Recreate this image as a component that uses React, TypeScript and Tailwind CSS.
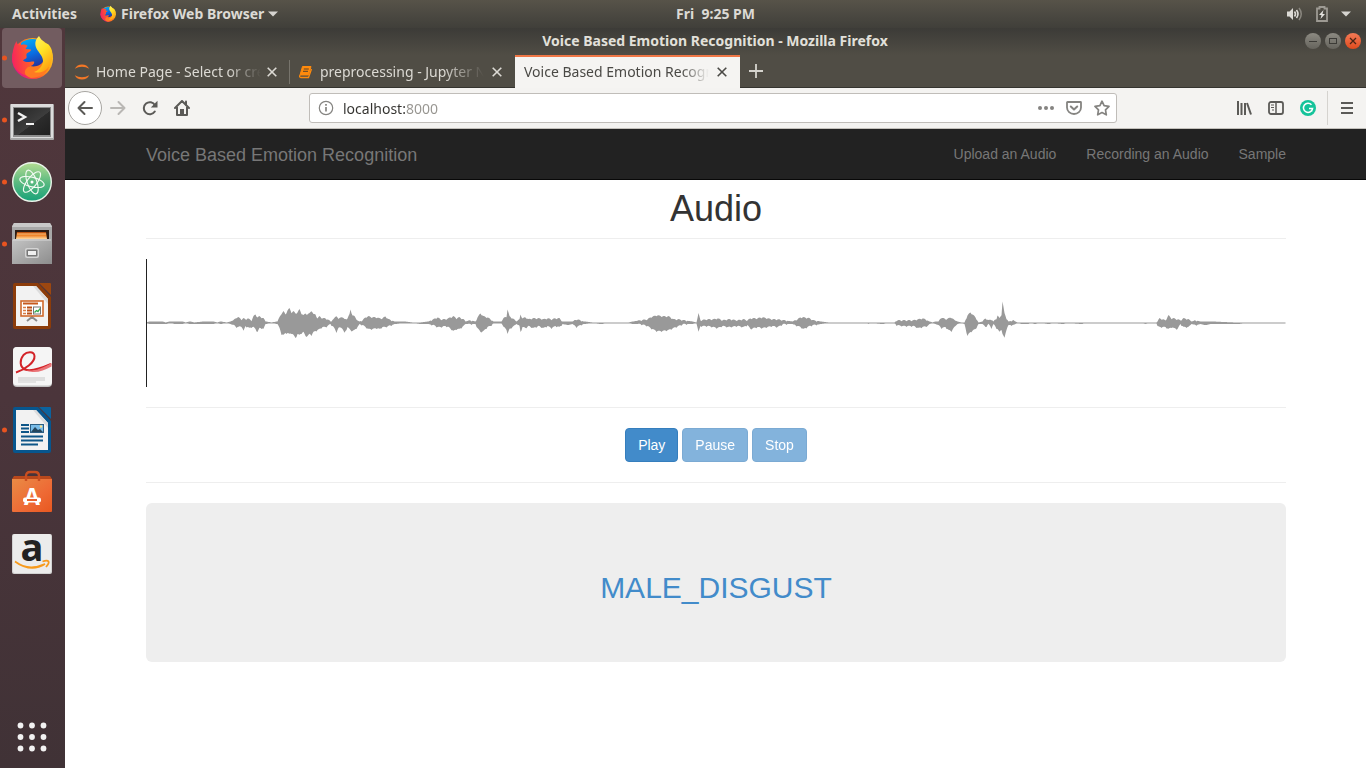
import React from "react";

type IconProps = { className?: string };

/* ---------- Dock artwork ---------- */

function FirefoxLogo({ id, className }: { id: string; className?: string }) {
  return (
    <svg viewBox="0 0 48 48" className={className} aria-hidden="true">
      <defs>
        <linearGradient id={id + "-body"} x1="0.95" y1="0.2" x2="0.05" y2="0.7">
          <stop offset="0" stopColor="#ffd42a" />
          <stop offset="0.35" stopColor="#ff9a16" />
          <stop offset="0.65" stopColor="#ff4f33" />
          <stop offset="1" stopColor="#e31587" />
        </linearGradient>
        <linearGradient id={id + "-globe"} x1="0.3" y1="0" x2="0.6" y2="1">
          <stop offset="0" stopColor="#00a8f5" />
          <stop offset="0.5" stopColor="#0a6be0" />
          <stop offset="1" stopColor="#2b2a8f" />
        </linearGradient>
        <linearGradient id={id + "-head"} x1="0" y1="0.6" x2="1" y2="0.4">
          <stop offset="0" stopColor="#f5245e" />
          <stop offset="0.6" stopColor="#ff5a2c" />
          <stop offset="1" stopColor="#ff8a1c" />
        </linearGradient>
        <linearGradient id={id + "-tail"} x1="0" y1="0" x2="0.5" y2="1">
          <stop offset="0" stopColor="#fff36a" />
          <stop offset="0.5" stopColor="#ffe226" />
          <stop offset="1" stopColor="#ffa412" />
        </linearGradient>
      </defs>
      <circle cx="24.500" cy="24.500" r="20.500" fill={"url(#" + id + "-body)"} />
      <path d="M13 9c5-4 12-5 17-3l8 12c1 9-3 17-12 17-7 0-12-4-13-10z" fill={"url(#" + id + "-globe)"} />
      <path
        d="M8.500 7c.3 2.500 1.500 4 3 4.500 2.500-1.200 6-1.400 8 .3l-2 3.200 5.500.5c.5 2-4 3-4.500 4.500-.5 2 1 3-.5 4.500-1.500 1-2.500 1-3 2 4 3 8 .5 11 1 1 2-1.500 4.500-5 5 3 3 7 1.500 9 0l2 6-8 4C14 42 5 36 4.200 26 4 19 5.500 12 8.500 7z"
        fill={"url(#" + id + "-head)"}
      />
      <path d="M22 32c6 1.500 12-1 14-6l5 7c-3 7-10 11-18 11-7-2-9-8-1-12z" fill="#ff7a22" />
      <path
        d="M31 2c-4 4-4.500 8-2.500 12.500 2 4 6 7 6.500 12C35 32 31 36 26 38c6 2 13-1 16-7 4-8 3-15-1-20-1-1-2.500-1.500-4.500-2.500-2-2-4-3.500-5.500-6.500z"
        fill={"url(#" + id + "-tail)"}
      />
    </svg>
  );
}

function TerminalArt({ className }: IconProps) {
  return (
    <svg viewBox="0 0 48 48" className={className} aria-hidden="true">
      <defs>
        <linearGradient id="term-bg" x1="0" y1="0" x2="1" y2="1">
          <stop offset="0" stopColor="#262626" />
          <stop offset="0.55" stopColor="#3d3d3d" />
          <stop offset="0.56" stopColor="#2c2c2c" />
          <stop offset="1" stopColor="#1f1f1f" />
        </linearGradient>
      </defs>
      <rect x="2" y="8" width="44" height="36" rx="1" fill="#a8a8a8" />
      <rect x="3" y="8" width="42" height="34" fill="#dcdcdc" />
      <rect x="5" y="11" width="38" height="30" fill="#8d8d8d" />
      <rect x="6" y="12" width="36" height="27" fill="url(#term-bg)" />
      <path d="M10 17l7 4-7 4" fill="none" stroke="#f2f2f2" strokeWidth="2.400" />
      <path d="M18 28h8" stroke="#f2f2f2" strokeWidth="2" />
    </svg>
  );
}

function AtomArt({ className }: IconProps) {
  return (
    <svg viewBox="0 0 48 48" className={className} aria-hidden="true">
      <defs>
        <linearGradient id="atom-bg" x1="0" y1="0" x2="0" y2="1">
          <stop offset="0" stopColor="#b4dc92" />
          <stop offset="0.5" stopColor="#5cba80" />
          <stop offset="1" stopColor="#17a279" />
        </linearGradient>
      </defs>
      <circle cx="24" cy="24" r="19.300" fill="url(#atom-bg)" stroke="#eaf5ea" strokeWidth="1.400" />
      <g fill="none" stroke="#f3faf3" strokeWidth="1.100">
        <ellipse cx="24" cy="24" rx="12.500" ry="4.800" transform="rotate(14 24 24)" />
        <ellipse cx="24" cy="24" rx="12.500" ry="4.800" transform="rotate(70 24 24)" />
        <ellipse cx="24" cy="24" rx="12.500" ry="4.800" transform="rotate(128 24 24)" />
      </g>
      <circle cx="24" cy="24" r="1.500" fill="#fff" />
    </svg>
  );
}

function FilesArt({ className }: IconProps) {
  return (
    <svg viewBox="0 0 48 48" className={className} aria-hidden="true">
      <defs>
        <linearGradient id="files-body" x1="0" y1="0" x2="1" y2="1">
          <stop offset="0" stopColor="#c4c4c4" />
          <stop offset="1" stopColor="#8d8d8d" />
        </linearGradient>
        <linearGradient id="files-paper" x1="0" y1="0" x2="0" y2="1">
          <stop offset="0" stopColor="#b54a0c" />
          <stop offset="0.5" stopColor="#f0862b" />
          <stop offset="1" stopColor="#ffd9a0" />
        </linearGradient>
      </defs>
      <path d="M6 3h36l2 3v38H4V6z" fill="#a8a8a8" />
      <path d="M6 3h36l2 4H4z" fill="#c9c9c9" />
      <rect x="7" y="10" width="34" height="9" fill="#2c1c14" />
      <path d="M9 12h29l1 7H8z" fill="url(#files-paper)" />
      <path d="M9 14h29" stroke="#ffc27a" strokeWidth="1" />
      <path d="M4 20l2-1h36l2 1v24H4z" fill="url(#files-body)" />
      <path d="M5 20h38" stroke="#d9d9d9" strokeWidth="1" />
      <rect x="17" y="28" width="14" height="10" rx="2" fill="#d4d4d4" />
      <rect x="18.500" y="29.500" width="11" height="7" rx="1" fill="#777" />
      <rect x="20" y="31" width="8" height="4" fill="#efefef" />
    </svg>
  );
}

function SheetBase({ dark, light }: { dark: string; light: string }) {
  return (
    <>
      <path d="M7 1h23l13 14v30a2 2 0 0 1-2 2H7a2 2 0 0 1-2-2V3a2 2 0 0 1 2-2z" fill={dark} />
      <path d="M8 4h20l12 13v27H8z" fill="#f2f2f2" />
      <path d="M28 4l12 13v5L25 4z" fill="#dcdcdc" />
      <path d="M31 1h11a1 1 0 0 1 1 1v11z" fill={light} />
    </>
  );
}

function ImpressArt({ className }: IconProps) {
  return (
    <svg viewBox="0 0 48 48" className={className} aria-hidden="true">
      <SheetBase dark="#8c3c0a" light="#9c4710" />
      <path d="M24 34v3M19 39l5-4 5 4" fill="none" stroke="#8a8a8a" strokeWidth="2" />
      <rect x="13" y="19" width="22" height="15" fill="#fff" stroke="#d0692c" strokeWidth="1.600" />
      <path d="M15 21.500h15" stroke="#c65a1e" strokeWidth="2" />
      <path d="M15 25.500h3M15 28.500h3M15 31.500h3" stroke="#d87c46" strokeWidth="1.600" />
      <path d="M19 25.500h5M19 28.500h5M19 31.500h5" stroke="#bb4f15" strokeWidth="1.800" />
      <rect x="25.500" y="25" width="7" height="7" fill="#fff" stroke="#777" />
      <path d="M26.500 30.500l2-2 1.500 1 2-3" fill="none" stroke="#2faa4a" strokeWidth="1.300" />
    </svg>
  );
}

function ViewerArt({ className }: IconProps) {
  return (
    <svg viewBox="0 0 48 48" className={className} aria-hidden="true">
      <rect x="5" y="3" width="39" height="40" rx="4" fill="#c2c2c2" />
      <rect x="5" y="3" width="39" height="38.500" rx="4" fill="#f5f5f5" />
      <rect x="10" y="33" width="27" height="4" fill="#dedede" />
      <rect x="10" y="37" width="18" height="2" fill="#e2e2e2" />
      <path
        d="M8 28.500c9-3 19-10 18.500-16.500C26 7 19 7.500 15.500 11c-4 5-4 12 1.500 14.500 7 2.500 18-2 26-5.500"
        fill="none"
        stroke="#d32328"
        strokeWidth="2"
      />
      <path d="M18 26c7 2 15-1 25.500-7v3.500C34 28 25 30 18 26z" fill="#ea7477" />
    </svg>
  );
}

function WriterArt({ className }: IconProps) {
  return (
    <svg viewBox="0 0 48 48" className={className} aria-hidden="true">
      <SheetBase dark="#07568e" light="#0b639f" />
      <g stroke="#0d5688" strokeWidth="1.800">
        <path d="M13 19h8M13 22.500h8M13 26h8" />
        <path d="M13 30.500h22M13 34.500h22M13 38.500h17" />
      </g>
      <rect x="22" y="18" width="14" height="9" fill="#2d5f83" />
      <rect x="23" y="19" width="12" height="7" fill="#79bce8" />
      <path d="M23 26l4-5 3 3 2-1 3 3z" fill="#25465c" />
      <circle cx="33" cy="20.500" r="1.200" fill="#ffe38a" />
    </svg>
  );
}

function SoftwareArt({ className }: IconProps) {
  return (
    <svg viewBox="0 0 48 48" className={className} aria-hidden="true">
      <defs>
        <linearGradient id="bag" x1="0" y1="0" x2="1" y2="1">
          <stop offset="0" stopColor="#e98b45" />
          <stop offset="0.6" stopColor="#ee6a35" />
          <stop offset="1" stopColor="#e85820" />
        </linearGradient>
      </defs>
      <path d="M6 8h36l2 3H4z" fill="#b8481c" />
      <path d="M4 11h40v32a1 1 0 0 1-1 1H5a1 1 0 0 1-1-1z" fill="url(#bag)" />
      <path d="M18 13V8q0-4 4-4h5q4 0 4 4v5" fill="none" stroke="#c94e20" strokeWidth="2.400" />
      <text x="24" y="37" textAnchor="middle" fontSize="23" fontWeight="700" fill="#fff" fontFamily="Open Sans, sans-serif">
        A
      </text>
      <rect x="15" y="29.500" width="18" height="5" rx="2" fill="#fff" />
      <rect x="19" y="31" width="10" height="2" fill="#e9622d" />
    </svg>
  );
}

function AmazonArt({ className }: IconProps) {
  return (
    <svg viewBox="0 0 48 48" className={className} aria-hidden="true">
      <rect x="4" y="4" width="40" height="40" rx="2" fill="#d2d2d2" />
      <rect x="5" y="4" width="38" height="39" rx="2" fill="#ececec" />
      <text x="24" y="31" textAnchor="middle" fontSize="38" fontWeight="700" fill="#222" fontFamily="Open Sans, sans-serif">
        a
      </text>
      <path d="M7 31.500q13 10 30 2.500-14 9-30-2.500z" fill="#f79a1c" stroke="#f79a1c" strokeWidth="1.600" />
      <path d="M34.500 31.500q5-1.500 6 0t-2.500 5.500" fill="none" stroke="#f79a1c" strokeWidth="1.800" />
    </svg>
  );
}

/* ---------- Dock ---------- */

const dockApps = [
  { name: "Firefox Web Browser", art: <FirefoxLogo id="dock" className="size-12" />, running: true, focused: true },
  { name: "Terminal", art: <TerminalArt className="size-12" />, running: true },
  { name: "Atom", art: <AtomArt className="size-12" />, running: true },
  { name: "Files", art: <FilesArt className="size-12" />, running: true },
  { name: "LibreOffice Impress", art: <ImpressArt className="size-12" />, running: false },
  { name: "Document Viewer", art: <ViewerArt className="size-12" />, running: false },
  { name: "LibreOffice Writer", art: <WriterArt className="size-12" />, running: true },
  { name: "Ubuntu Software", art: <SoftwareArt className="size-12" />, running: false },
  { name: "Amazon", art: <AmazonArt className="size-12" />, running: false },
];

function Dock() {
  return (
    <nav
      aria-label="Dock"
      className="flex w-[65px] shrink-0 flex-col gap-0.5 bg-linear-to-b from-[#50373c] via-[#4b353b] to-[#403236] px-0.5"
    >
      {dockApps.map((app) => (
        <button
          key={app.name}
          type="button"
          aria-label={app.name}
          className={
            app.focused
              ? "relative flex size-[60px] items-center justify-center rounded bg-[#725c60]"
              : "relative flex size-[60px] items-center justify-center rounded"
          }
        >
          {app.running && <span className="absolute top-1/2 left-0 size-[5px] -translate-y-1/2 rounded-full bg-[#e95420]" />}
          {app.art}
        </button>
      ))}
      <button type="button" aria-label="Show Applications" className="mt-auto mb-px flex size-[60px] items-center justify-center">
        <svg viewBox="0 0 48 48" className="size-12" aria-hidden="true" fill="#f2f2f2">
          {[12.5, 24, 35.5].map((y) => [12.5, 24, 35.5].map((x) => <circle key={x + "-" + y} cx={x} cy={y} r="2.900" />))}
        </svg>
      </button>
    </nav>
  );
}

/* ---------- Desktop bar ---------- */

function Caret() {
  return (
    <svg viewBox="0 0 10 6" className="h-1.5 w-2.5" aria-hidden="true">
      <path d="M0 .5h10L5 5.500z" fill="#d6d4d0" />
    </svg>
  );
}

function DesktopBar() {
  return (
    <header className="grid h-7 grid-cols-[1fr_auto_1fr] items-center bg-linear-to-b from-[#575349] to-[#403f3a] pr-[15px] pl-3 text-sm font-bold text-[#dcdad5]">
      <div className="flex items-center gap-[22px]">
        <button type="button">Activities</button>
        <button type="button" className="flex items-center gap-1">
          <FirefoxLogo id="bar" className="size-[18px]" />
          <span>Firefox Web Browser</span>
          <Caret />
        </button>
      </div>
      <time className="ml-[68px] whitespace-pre">Fri  9:25 PM</time>
      <button type="button" aria-label="System menu" className="ml-auto flex items-center gap-3">
        <svg viewBox="0 0 16 14" className="h-3.5 w-4" aria-hidden="true">
          <path d="M0 4.500h2.500L6 1v12L2.500 9.500H0z" fill="#dcdad5" />
          <path d="M7.500 4.500q2 2.500 0 5M9.500 3q3 4 0 8" fill="none" stroke="#dcdad5" strokeWidth="1.600" />
          <path d="M12 1q4.500 6 0 12" fill="none" stroke="#89867e" strokeWidth="1.500" />
        </svg>
        <svg viewBox="0 0 14 16" className="h-4 w-3.5" aria-hidden="true">
          <path d="M2 2.500h2.500V1h5v1.500H12V15H2z" fill="none" stroke="#9d9a93" strokeWidth="1.800" />
          <path d="M8.500 4L4 9h2.500L5.500 13 10 8H7.500z" fill="#e4e2de" />
        </svg>
        <Caret />
      </button>
    </header>
  );
}

/* ---------- Browser window ---------- */

function CloseCross() {
  return (
    <svg viewBox="0 0 10 10" className="size-2.5" aria-hidden="true">
      <path d="M.7.7l8.600 8.600M9.300.7L.7 9.300" stroke="currentColor" strokeWidth="1.600" fill="none" />
    </svg>
  );
}

function WindowButtons() {
  const base = "flex size-4 items-center justify-center rounded-full";
  return (
    <div className="flex gap-1">
      <button type="button" aria-label="Minimize" className={base + " bg-linear-to-b from-[#8c8a82] to-[#66645d]"}>
        <svg viewBox="0 0 16 16" className="size-4"><path d="M4 8.500h8" stroke="#3c3b37" /></svg>
      </button>
      <button type="button" aria-label="Maximize" className={base + " bg-linear-to-b from-[#8c8a82] to-[#66645d]"}>
        <svg viewBox="0 0 16 16" className="size-4"><rect x="4.500" y="5.500" width="7" height="5" fill="none" stroke="#3c3b37" /></svg>
      </button>
      <button type="button" aria-label="Close" className={base + " bg-linear-to-b from-[#f47a55] to-[#df4a1a]"}>
        <svg viewBox="0 0 16 16" className="size-4"><path d="M5 5l6 6M11 5l-6 6" stroke="#4a2414" strokeWidth="1.300" /></svg>
      </button>
    </div>
  );
}

function JupyterIcon() {
  return (
    <svg viewBox="0 0 16 16" className="size-4 shrink-0" aria-hidden="true" fill="#f37726">
      <path d="M.8 4.800Q3 .5 8 .5t7.200 4.300Q12 2.800 8 2.800T.8 4.800z" />
      <path d="M.8 11.200Q3 15.500 8 15.500t7.200-4.300Q12 13.200 8 13.200T.8 11.200z" />
    </svg>
  );
}

function NotebookIcon() {
  return (
    <svg viewBox="0 0 14 14" className="size-3.5 shrink-0" aria-hidden="true">
      <path d="M4.500 1.500h8.500L10.500 10H2z" fill="#ff8a0c" stroke="#ff8a0c" strokeLinejoin="round" />
      <path d="M2 10q-1 2.500.8 2.500h7.700L13.500 4" fill="none" stroke="#ff8a0c" strokeWidth="1.300" />
      <path d="M5.800 4h5M5 6.300h5" stroke="#57422b" strokeWidth="1" />
    </svg>
  );
}

function TabStrip() {
  const label = "min-w-0 flex-1 overflow-hidden whitespace-nowrap";
  return (
    <div className="flex h-[33px] items-stretch border-b border-[#35342f] bg-[#504d45] text-sm text-[#dcdad4]" role="tablist">
      <div role="tab" className="flex w-[224px] items-center gap-1.5 border-t-2 border-transparent pr-3 pl-[9px]">
        <JupyterIcon />
        <span className={label + " mask-r-from-80%"}>Home Page - Select or create a notebook</span>
        <button type="button" aria-label="Close tab"><CloseCross /></button>
      </div>
      <div role="tab" className="flex w-[225px] items-center gap-2 border-t-2 border-transparent pr-3">
        <span className="h-6 border-l border-[#77746c]" />
        <NotebookIcon />
        <span className={label + " mask-r-from-75%"}>preprocessing - Jupyter Notebook</span>
        <button type="button" aria-label="Close tab"><CloseCross /></button>
      </div>
      <div
        role="tab"
        aria-selected="true"
        className="-mb-px ml-px flex w-[225px] items-center gap-2 border-t-2 border-[#f07746] bg-[#f5f4f2] pr-[13px] pb-px pl-[9px] text-[#4a4945]"
      >
        <span className={label + " mask-r-from-85%"}>Voice Based Emotion Recognition</span>
        <button type="button" aria-label="Close tab"><CloseCross /></button>
      </div>
      <button type="button" aria-label="New tab" className="flex w-8 items-center justify-center">
        <svg viewBox="0 0 14 14" className="size-3.5" aria-hidden="true">
          <path d="M7 0v14M0 7h14" stroke="#d6d4ce" strokeWidth="1.800" />
        </svg>
      </button>
    </div>
  );
}

const stroke = { fill: "none", stroke: "currentColor", strokeWidth: 2, strokeLinecap: "round", strokeLinejoin: "round" } as const;

function Toolbar() {
  return (
    <div className="flex h-[41px] items-center border-b border-[#c3c0bb] bg-[#f4f3f1] pr-3 pl-[3px] text-[#5b5a57]">
      <div className="flex items-center gap-4">
        <button type="button" aria-label="Back" className="flex size-[34px] items-center justify-center rounded-full border border-[#a8a6a2] bg-white">
          <svg viewBox="0 0 16 16" className="size-4"><path d="M15 8H1.500M7.500 2l-6 6 6 6" {...stroke} /></svg>
        </button>
        <div className="-ml-2 flex items-center gap-4">
          <button type="button" aria-label="Forward" className="text-[#b9b7b4]">
            <svg viewBox="0 0 16 16" className="size-4"><path d="M1 8h13.500M8.500 2l6 6-6 6" {...stroke} /></svg>
          </button>
          <button type="button" aria-label="Reload">
            <svg viewBox="0 0 16 16" className="size-4">
              <path d="M12.800 11.500A6 6 0 1 1 13 5.200" {...stroke} />
              <path d="M15.500.8v6.700H8.800z" fill="currentColor" />
            </svg>
          </button>
          <button type="button" aria-label="Home">
            <svg viewBox="0 0 16 16" className="size-4">
              <path d="M1 8l7-7 7 7M3 7v8h10V7" {...stroke} />
              <path d="M6 15V9h4v6z" fill="currentColor" />
              <path d="M12 1.500v3" {...stroke} />
            </svg>
          </button>
        </div>
      </div>

      <div className="ml-[119px] flex h-[30px] max-w-[808px] flex-1 items-center gap-3 rounded-[3px] border border-[#c0bdb9] bg-white pr-1.5 pl-2 text-[#858481]">
        <svg viewBox="0 0 16 16" className="size-4" aria-hidden="true">
          <circle cx="8" cy="8" r="6.700" fill="none" stroke="currentColor" strokeWidth="1.200" />
          <path d="M8 7v4.500M8 4v1.800" stroke="currentColor" strokeWidth="1.700" />
        </svg>
        <input
          aria-label="Address"
          defaultValue="localhost:8000"
          className="-ml-[3px] min-w-0 flex-1 bg-linear-to-r from-[#33322f] from-[62px] to-[#96948f] to-[62px] bg-clip-text pt-0.5 text-sm text-transparent caret-[#33322f] outline-none"
        />
        <button type="button" aria-label="Page actions">
          <svg viewBox="0 0 16 16" className="size-4" fill="currentColor">
            <circle cx="2" cy="8" r="2" /><circle cx="8" cy="8" r="2" /><circle cx="14" cy="8" r="2" />
          </svg>
        </button>
        <button type="button" aria-label="Save to Pocket">
          <svg viewBox="0 0 16 16" className="size-4">
            <path d="M1.500 2h13a.5.5 0 0 1 .5.500V7.500a7 6.500 0 0 1-14 0v-5a.5.5 0 0 1 .5-.500z" {...stroke} strokeWidth={1.8} />
            <path d="M4.800 6.500L8 9.500l3.200-3" {...stroke} />
          </svg>
        </button>
        <button type="button" aria-label="Bookmark this page">
          <svg viewBox="0 0 16 16" className="size-4">
            <path d="M8 1.200l2.100 4.500 4.900.7-3.500 3.500.8 4.900L8 12.500l-4.300 2.300.8-4.900L1 6.400l4.900-.7z" {...stroke} strokeWidth={1.7} />
          </svg>
        </button>
      </div>

      <div className="ml-auto flex items-center gap-4">
        <button type="button" aria-label="Library">
          <svg viewBox="0 0 16 16" className="size-4"><path d="M2 1v14M5.500 3v12M9 3v12M11 3l4 11.500" stroke="currentColor" strokeWidth="2" fill="none" /></svg>
        </button>
        <button type="button" aria-label="Sidebars">
          <svg viewBox="0 0 16 16" className="size-4">
            <rect x="1" y="2" width="14" height="12" rx="2" {...stroke} strokeWidth={1.8} />
            <path d="M8 2v12" stroke="currentColor" strokeWidth="1.500" />
            <path d="M3 5h3M3 7.500h3M4 10h2" stroke="currentColor" />
          </svg>
        </button>
        <button type="button" aria-label="Grammarly">
          <svg viewBox="0 0 16 16" className="size-4">
            <circle cx="8" cy="8" r="8" fill="#15c39a" />
            <path d="M11.500 4.700A4.600 4.600 0 1 0 12.500 9M9 8.500h3.500l-1 3" fill="none" stroke="#fff" strokeWidth="1.500" />
          </svg>
        </button>
        <div className="-ml-[5px] flex h-[34px] items-center border-l border-[#d5d3cf] pl-3">
          <button type="button" aria-label="Open menu">
            <svg viewBox="0 0 14 14" className="size-3.5"><path d="M1 2h12M1 7h12M1 12h12" stroke="currentColor" strokeWidth="2" /></svg>
          </button>
        </div>
      </div>
    </div>
  );
}

/* ---------- Web page ---------- */

// Envelope samples: [position, height above the axis, depth below it]
const envelope: [number, number, number][] = [
  [0, 0, 0], [3, 1, 1], [16, 1, 1], [19, 0, 1], [24, 1, 0], [28, 1, 1], [36, 1, 1], [39, 0, 0], [44, 1, 1], [48, 0, 1], [58, 1, 1],
  [66, 1, 1], [71, 0, 0], [74, 1, 1], [80, 0, 0], [84, 1, 1], [87, 2, 2], [90, 5, 4], [92, 5, 4], [95, 3, 3], [97, 4, 8], [99, 3, 3],
  [101, 4, 4], [103, 3, 5], [105, 2, 4], [107, 6, 4], [109, 8, 6], [111, 5, 9], [113, 6, 5], [115, 5, 5], [117, 4, 6], [119, 1, 1],
  [125, 0, 0], [131, 1, 1], [133, 5, 5], [135, 9, 11], [137, 11, 12], [139, 8, 10], [141, 12, 10], [143, 14, 11], [145, 10, 10],
  [147, 11, 12], [149, 9, 15], [151, 10, 11], [153, 13, 12], [155, 9, 10], [157, 7, 9], [159, 9, 13], [161, 8, 13], [163, 9, 11],
  [165, 12, 12], [167, 8, 9], [169, 8, 8], [171, 4, 7], [173, 6, 6], [176, 4, 4], [179, 4, 4], [181, 3, 3], [184, 1, 1], [187, 3, 4],
  [190, 7, 9], [192, 3, 5], [195, 6, 4], [198, 3, 10], [201, 4, 4], [203, 8, 6], [204, 13, 7], [206, 7, 8], [208, 6, 7], [211, 2, 4],
  [213, 1, 1], [216, 2, 2], [219, 5, 4], [222, 6, 6], [226, 5, 6], [230, 5, 5], [233, 4, 6], [236, 4, 4], [239, 6, 4], [242, 3, 3],
  [245, 2, 2], [248, 1, 1], [258, 1, 0], [266, 0, 0], [274, 0, 1], [282, 1, 1], [287, 3, 2], [291, 5, 4], [294, 3, 4], [299, 3, 3],
  [302, 4, 4], [307, 6, 8], [310, 4, 6], [313, 5, 6], [317, 3, 3], [319, 1, 1], [324, 2, 1], [329, 1, 1], [331, 5, 5], [334, 9, 9],
  [337, 6, 8], [341, 5, 4], [344, 3, 3], [347, 1, 0], [355, 1, 0], [357, 4, 4], [360, 6, 6], [361, 13, 11], [363, 6, 6], [366, 4, 4],
  [370, 1, 1], [373, 3, 3], [374, 8, 9], [376, 4, 4], [379, 5, 5], [382, 3, 3], [387, 4, 5], [392, 4, 3], [397, 3, 5], [401, 4, 3],
  [405, 3, 5], [409, 4, 3], [413, 4, 4], [416, 1, 1], [422, 1, 2], [426, 1, 1], [430, 3, 4], [434, 2, 2], [437, 1, 1], [446, 0, 0],
  [455, 0, 1], [460, 0, 0], [482, 0, 0], [487, 1, 1], [494, 2, 1], [501, 3, 3], [504, 5, 5], [510, 7, 8], [516, 6, 8], [522, 6, 7],
  [527, 3, 5], [532, 3, 3], [537, 2, 1], [546, 1, 1], [550, 0, 0], [552, 9, 9], [554, 2, 3], [561, 3, 3], [567, 3, 4], [571, 4, 5],
  [576, 2, 3], [582, 3, 4], [591, 2, 3], [597, 3, 4], [601, 2, 2], [604, 4, 6], [611, 4, 4], [616, 5, 5], [621, 4, 4], [626, 3, 3],
  [631, 3, 4], [637, 2, 1], [646, 1, 1], [651, 3, 3], [654, 5, 4], [657, 5, 6], [663, 4, 3], [667, 2, 2], [674, 1, 1], [682, 0, 0],
  [720, 0, 0], [722, 0, 1], [724, 0, 0], [736, 0, 1], [741, 0, 0], [748, 0, 0], [750, 2, 2], [757, 2, 3], [767, 2, 3], [772, 3, 5],
  [776, 4, 4], [781, 2, 3], [783, 1, 1], [786, 0, 0], [789, 1, 1], [792, 1, 2], [795, 5, 5], [799, 3, 4], [802, 4, 7], [805, 5, 8],
  [808, 2, 4], [811, 1, 1], [815, 0, 0], [818, 0, 1], [821, 7, 13], [822, 8, 11], [824, 10, 9], [827, 7, 7], [829, 5, 6], [832, 0, 1],
  [836, 1, 1], [839, 4, 4], [842, 2, 1], [845, 3, 5], [847, 1, 1], [850, 4, 5], [851, 7, 6], [853, 4, 9], [855, 8, 6], [856, 21, 11],
  [858, 9, 15], [860, 4, 6], [862, 1, 2], [867, 2, 2], [871, 0, 0], [876, 0, 1], [882, 0, 1], [884, 0, 0], [889, 0, 1], [893, 0, 0],
  [903, 0, 1], [906, 0, 0], [917, 0, 1], [920, 0, 0], [936, 0, 1], [938, 0, 0], [995, 0, 0], [999, 0, 1], [1003, 0, 0], [1010, 0, 0],
  [1011, 1, 3], [1013, 4, 4], [1019, 2, 4], [1022, 7, 6], [1025, 4, 4], [1027, 4, 5], [1031, 3, 6], [1034, 2, 1], [1037, 4, 4],
  [1042, 3, 4], [1045, 1, 1], [1049, 2, 2], [1054, 1, 1], [1059, 1, 2], [1064, 1, 1], [1087, 0, 1], [1092, 0, 1], [1099, 0, 0],
  [1140, 0, 0],
];

// Adds the fine ripple of the signal between two neighbouring samples.
function columns() {
  const top: string[] = [];
  const bottom: string[] = [];
  for (let i = 0; i < envelope.length - 1; i++) {
    const [x0, u0, d0] = envelope[i];
    const [x1, u1, d1] = envelope[i + 1];
    for (let x = x0; x < x1; x++) {
      const t = (x - x0) / (x1 - x0);
      const u = u0 + (u1 - u0) * t;
      const d = d0 + (d1 - d0) * t;
      const ripple = u > 1.5 ? ((x * x * 7) % 5) / 2 - 1 : 0;
      const px = x + 0.5;
      top.push(px + "," + (63.4 - Math.max(u + ripple * 0.8, 0)));
      bottom.unshift(px + "," + (64.4 + Math.max(d - ripple * 0.8 - 0.3, 0)));
    }
  }
  return top.concat(bottom).join(" ");
}

const wavePoints = columns();

function Waveform() {
  return (
    <svg viewBox="0 0 1140 128" preserveAspectRatio="none" className="block h-32 w-full" role="img" aria-label="Waveform">
      <polygon points={wavePoints} fill="#999" />
      <rect x="0" y="0" width="1" height="128" fill="#222" />
    </svg>
  );
}

function WebPage() {
  const btn = "h-[34px] rounded border border-[#357ebd] bg-[#428bca] px-3 text-sm text-white disabled:opacity-65";
  return (
    <div className="flex-1 bg-white font-['Liberation_Sans',Arial,sans-serif] text-[#333]">
      <nav className="border-b border-[#080808] bg-[#222] pl-px text-[#777]">
        <div className="mx-auto flex h-[50px] max-w-[1140px] items-center justify-between">
          <a href="#home" className="pt-0.5 text-lg">Voice Based Emotion Recognition</a>
          <div className="flex gap-[30px] text-sm">
            <a href="#upload">Upload an Audio</a>
            <a href="#record">Recording an Audio</a>
            <a href="#sample">Sample</a>
          </div>
        </div>
      </nav>
      <main className="pl-px">
        <div className="mx-auto max-w-[1140px] pt-[9px] text-center">
          <h1 className="text-4xl leading-10">Audio</h1>
          <hr className="mt-[9px] mb-5 border-[#eee]" />
          <Waveform />
          <hr className="my-5 border-[#eee]" />
          <div className="flex justify-center gap-1">
            <button type="button" className={btn}>Play</button>
            <button type="button" disabled className={btn}>Pause</button>
            <button type="button" disabled className={btn}>Stop</button>
          </div>
          <hr className="my-5 border-[#eee]" />
          <section className="rounded-md bg-[#eee] pt-[68px] pb-[58px]">
            <h2 className="text-3xl leading-[33px] text-[#428bca]">MALE_DISGUST</h2>
          </section>
        </div>
      </main>
    </div>
  );
}

export default function App() {
  return (
    <div className="flex min-h-screen flex-col bg-[#3c3b37] font-['Noto_Sans',sans-serif]">
      <DesktopBar />
      <div className="flex flex-1">
        <Dock />
        <div className="flex min-w-0 flex-1 flex-col">
          <div className="grid h-[27px] grid-cols-[1fr_auto_1fr] items-center bg-linear-to-b from-[#3c3b37] to-[#504d45] pr-[5px] pb-px text-[#e2e0da]">
            <div className="col-start-2 pl-1 text-sm font-bold">Voice Based Emotion Recognition - Mozilla Firefox</div>
            <div className="ml-auto"><WindowButtons /></div>
          </div>
          <TabStrip />
          <Toolbar />
          <WebPage />
        </div>
      </div>
    </div>
  );
}
